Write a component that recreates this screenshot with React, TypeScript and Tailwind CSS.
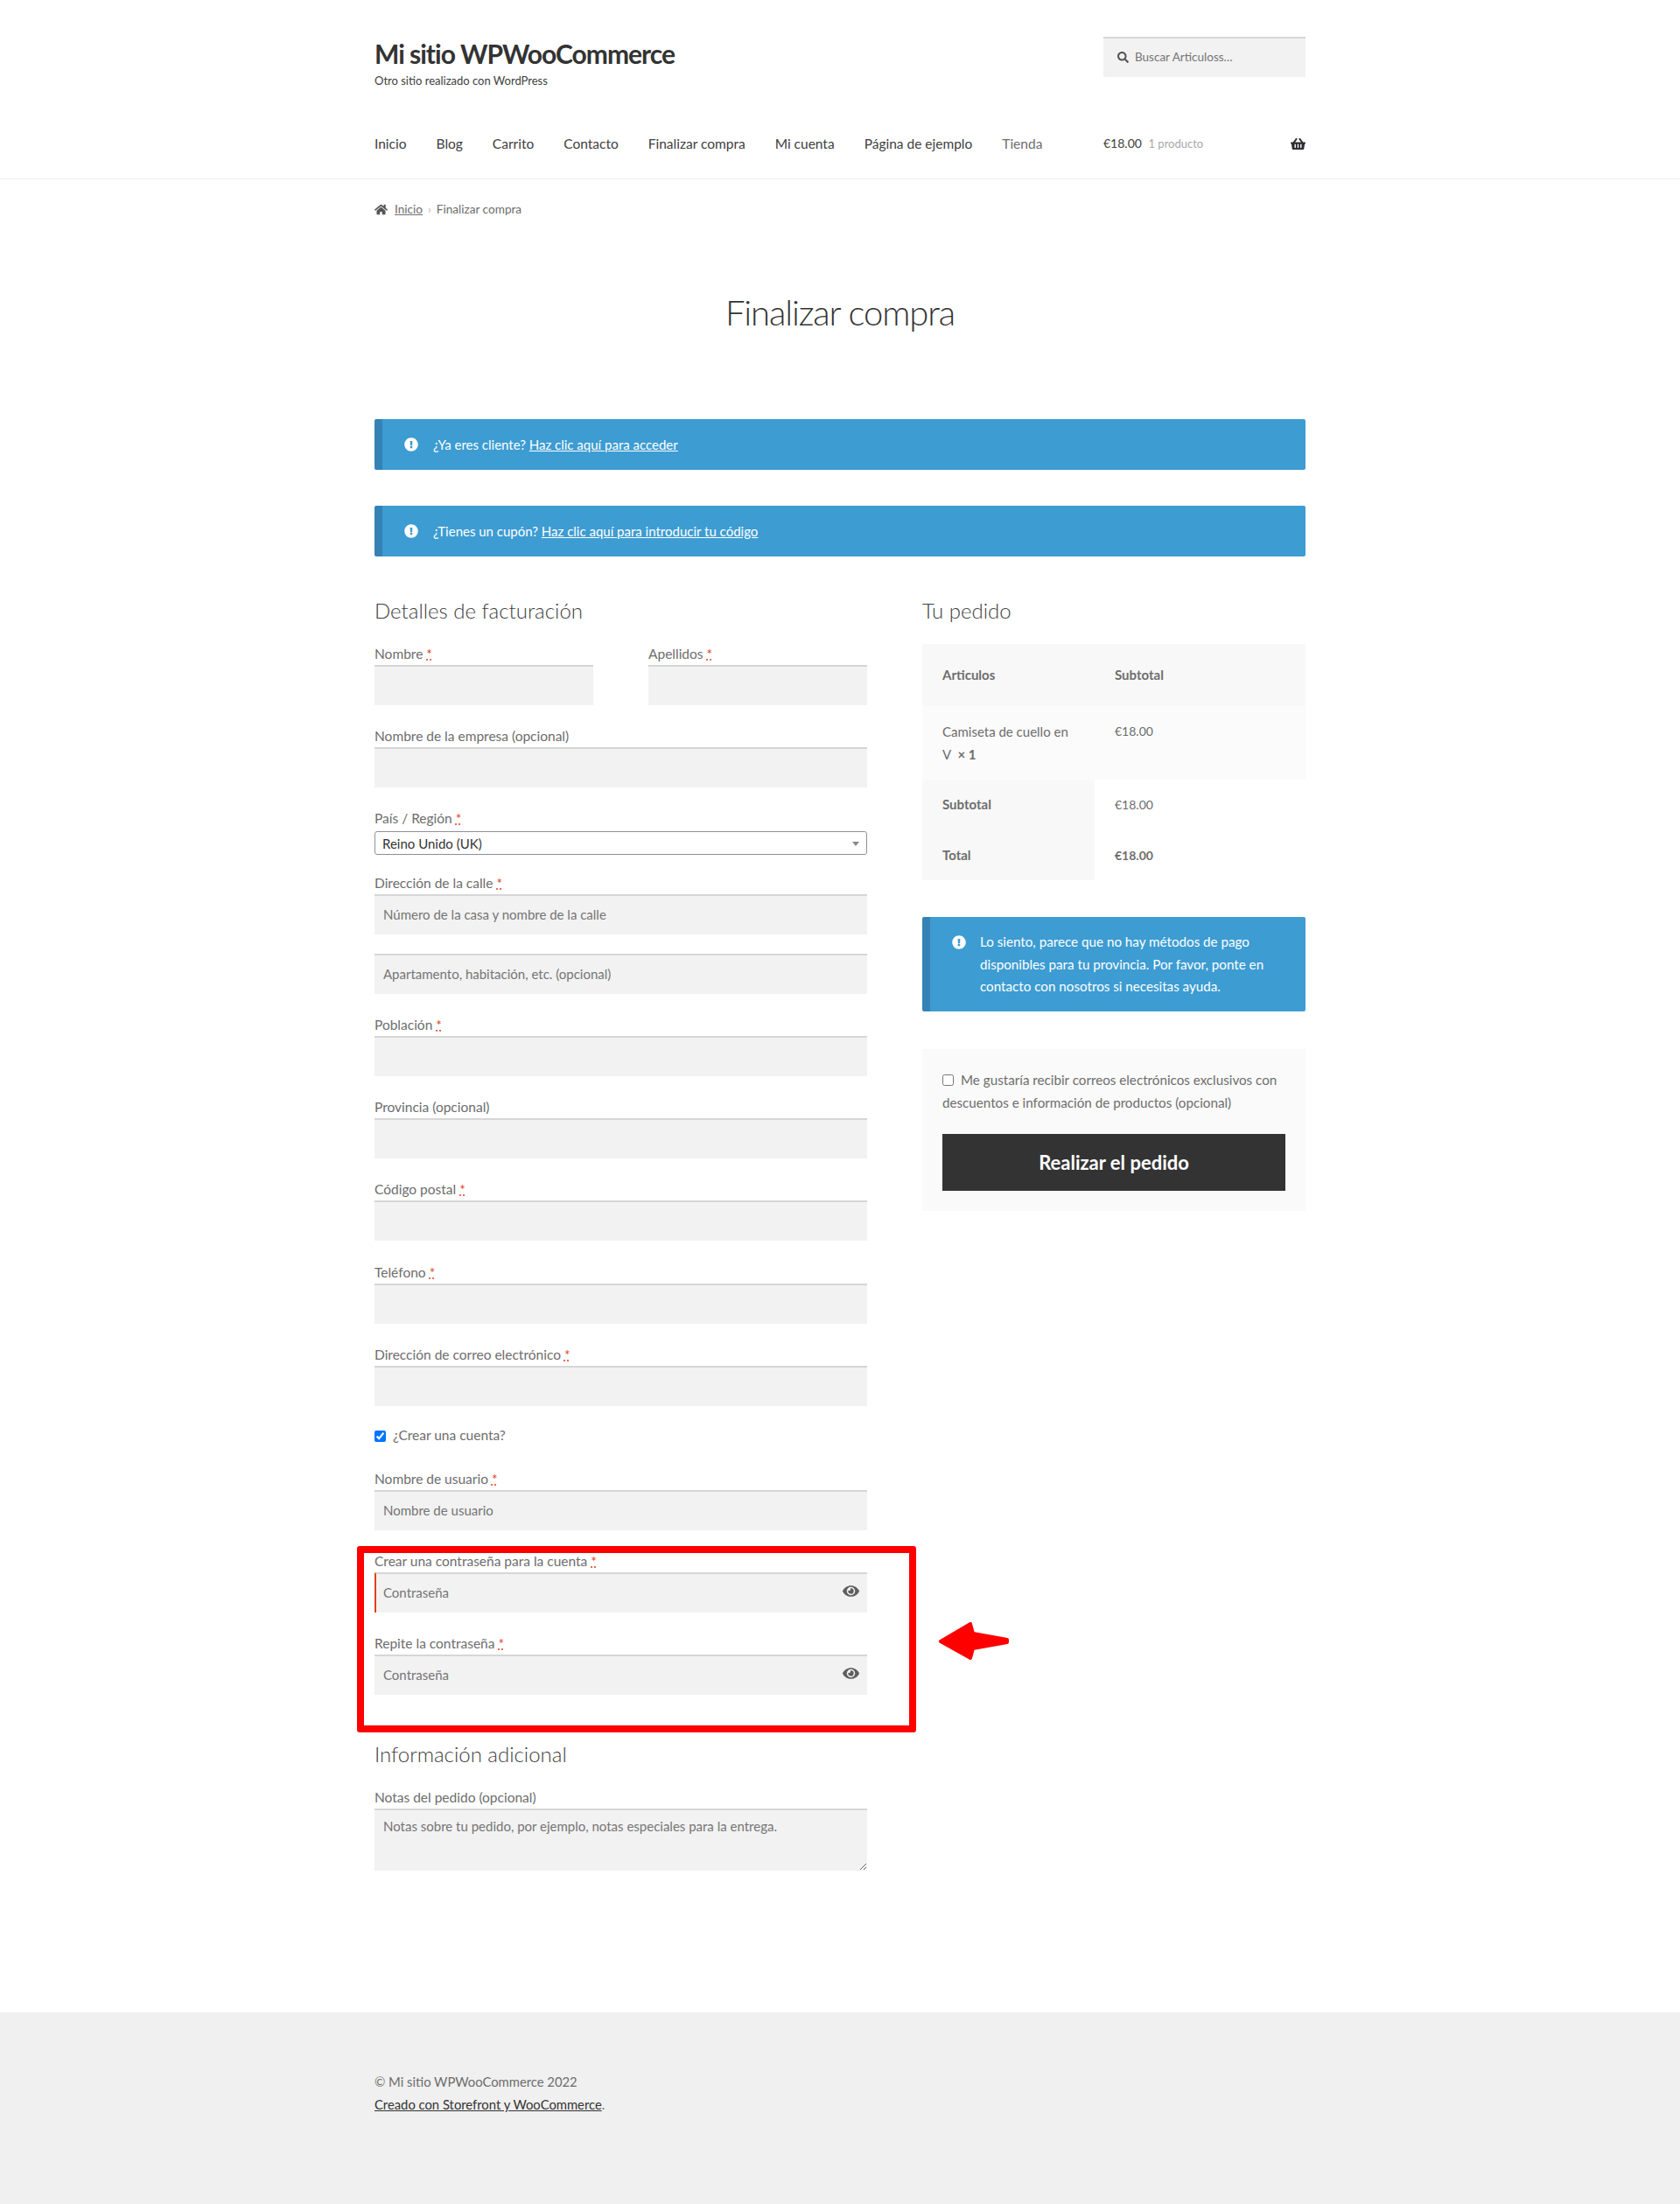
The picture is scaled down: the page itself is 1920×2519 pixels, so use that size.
import { FaExclamationCircle, FaEye, FaHome, FaSearch, FaShoppingBasket } from 'react-icons/fa'

const navItems = ['Inicio', 'Blog', 'Carrito', 'Contacto', 'Finalizar compra', 'Mi cuenta', 'Página de ejemplo']

function Req() {
  return <abbr className="ml-1 text-[#e2401c] underline decoration-dotted">*</abbr>
}

function Field({
  label,
  required,
  placeholder,
  className = '',
  inputClass = '',
  eye,
}: {
  label?: string
  required?: boolean
  placeholder?: string
  className?: string
  inputClass?: string
  eye?: boolean
}) {
  return (
    <div className={className}>
      {label && (
        <label className="block h-[25px] leading-[24px]">
          {label}
          {required && <Req />}
        </label>
      )}
      <div className="relative">
        <input
          placeholder={placeholder}
          className={`block h-[46px] w-full border-t-2 border-[#d6d6d6] bg-[#f2f2f2] px-[10px] pb-[3px] text-[15px] outline-none placeholder:text-[#757575] ${inputClass}`}
        />
        {eye && <FaEye className="absolute right-[9px] top-[12px] text-[19px] text-[#5f5f5f]" />}
      </div>
    </div>
  )
}

function Notice({ children, className = '' }: { children: React.ReactNode; className?: string }) {
  return (
    <div className={`flex rounded-[2px] border-l-[9px] border-[#3582b5] bg-[#3d9cd2] text-white ${className}`}>
      {children}
    </div>
  )
}

export default function App() {
  return (
    <div className="relative flex min-h-[2519px] flex-col bg-white font-['Lato',sans-serif] text-[15.5px] text-[#6d6d6d]">
      <header className="h-[205px] border-b border-[#ececec]">
        <div className="mx-auto w-[1064px] pt-[42px]">
          <div className="flex justify-between">
            <div>
              <h1 className="text-[30px] leading-[38px] font-bold tracking-[-1px] text-[#333333]">Mi sitio WPWooCommerce</h1>
              <p className="mt-[2px] text-[13px] leading-[20px] text-[#404040]">Otro sitio realizado con WordPress</p>
            </div>
            <div className="flex h-[46px] w-[231px] items-center gap-[7px] border-t-2 border-[#d6d6d6] bg-[#f2f2f2] pb-[2px] pl-[16px] text-[13.5px] text-[#757575]">
              <FaSearch className="text-[13px] text-[#555555]" />
              Buscar Articuloss…
            </div>
          </div>
          <div className="mt-[50px] flex items-center justify-between">
            <nav className="flex gap-[34px] text-[15.5px] leading-[24px] text-[#404040]">
              {navItems.map((item) => (
                <span key={item}>{item}</span>
              ))}
              <span className="text-[#6d6d6d]">Tienda</span>
            </nav>
            <div className="flex w-[231px] items-center justify-between">
              <span className="text-[14px] text-[#404040]">
                €18.00 <span className="ml-1 text-[13px] text-[#a8a8a8]">1 producto</span>
              </span>
              <FaShoppingBasket className="text-[17px] text-[#2c2d33]" />
            </div>
          </div>
        </div>
      </header>

      <main className="mx-auto w-[1064px] flex-1">
        <div className="mt-[23px] flex h-[22px] items-center text-[13.6px] text-[#6d6d6d]">
          <FaHome className="mr-[8px] text-[15px] text-[#555555]" />
          <span className="underline">Inicio</span>
          <span className="mx-[6px] text-[#bbbbbb]">›</span>
          Finalizar compra
        </div>

        <h2 className="mt-[75px] text-center text-[40px] leading-[64px] font-light tracking-[-1.1px] text-[#333333]">Finalizar compra</h2>

        <Notice className="mt-[90px] h-[58px] items-center text-[15px]">
          <FaExclamationCircle className="ml-[25px] text-[16px]" />
          <p className="ml-[17px]">
            ¿Ya eres cliente? <span className="underline">Haz clic aquí para acceder</span>
          </p>
        </Notice>
        <Notice className="mt-[41px] h-[58px] items-center text-[15px]">
          <FaExclamationCircle className="ml-[25px] text-[16px]" />
          <p className="ml-[17px]">
            ¿Tienes un cupón? <span className="underline">Haz clic aquí para introducir tu código</span>
          </p>
        </Notice>

        <div className="mt-[44px] flex justify-between">
          <section className="w-[563px]">
            <h3 className="text-[24px] leading-[36px] font-light text-[#404040]">Detalles de facturación</h3>
            <div className="mt-[19px] flex justify-between">
              <Field className="w-[250px]" label="Nombre" required />
              <Field className="w-[250px]" label="Apellidos" required />
            </div>
            <Field className="mt-[23px]" label="Nombre de la empresa (opcional)" />
            <div className="mt-[23px]">
              <label className="block h-[27px] leading-[24px]">
                País / Región
                <Req />
              </label>
              <div className="flex h-[27px] items-center justify-between rounded-[3px] border border-[#8f8f9d] px-[8px] pt-[1px] text-[15px] text-[#333333]">
                Reino Unido (UK)
                <span className="h-0 w-0 border-x-[4px] border-t-[5px] border-x-transparent border-t-[#888888]" />
              </div>
            </div>
            <Field className="mt-[20px]" label="Dirección de la calle" required placeholder="Número de la casa y nombre de la calle" />
            <Field className="mt-[22px]" placeholder="Apartamento, habitación, etc. (opcional)" />
            <Field className="mt-[23px]" label="Población" required />
            <Field className="mt-[23px]" label="Provincia (opcional)" />
            <Field className="mt-[23px]" label="Código postal" required />
            <Field className="mt-[24px]" label="Teléfono" required />
            <Field className="mt-[23px]" label="Dirección de correo electrónico" required />
            <div className="mt-[23px] flex h-[22px] items-center gap-[8px]">
              <input type="checkbox" defaultChecked className="h-[13px] w-[13px] accent-[#0075ff]" />
              ¿Crear una cuenta?
            </div>
            <Field className="mt-[26px]" label="Nombre de usuario" required placeholder="Nombre de usuario" />
            <Field className="mt-[23px]" label="Crear una contraseña para la cuenta" required placeholder="Contraseña" eye inputClass="border-t-0 border-l-2 border-l-[#e2401c] pl-[8px]" />
            <Field className="mt-[23px]" label="Repite la contraseña" required placeholder="Contraseña" eye />
            <h3 className="mt-[50px] text-[24px] leading-[36px] font-light text-[#404040]">Información adicional</h3>
            <div className="mt-[19px]">
              <label className="block h-[25px] leading-[24px]">Notas del pedido (opcional)</label>
              <textarea
                placeholder="Notas sobre tu pedido, por ejemplo, notas especiales para la entrega."
                className="block h-[71px] w-full border-t-2 border-[#d6d6d6] bg-[#f2f2f2] px-[10px] py-[7px] text-[15px] outline-none placeholder:text-[#757575]"
              />
            </div>
          </section>

          <section className="w-[438px]">
            <h3 className="text-[24px] leading-[36px] font-light text-[#404040]">Tu pedido</h3>
            <div className="mt-[20px] grid grid-cols-[197px_1fr] text-[15px]">
              <div className="flex h-[71px] items-center bg-[#f8f8f8] pl-[23px] font-bold">Articulos</div>
              <div className="flex h-[71px] items-center bg-[#f8f8f8] pl-[23px] font-bold">Subtotal</div>
              <div className="h-[84px] bg-[#fbfbfb] pt-[16px] pr-[23px] pl-[23px] leading-[26px]">
                Camiseta de cuello en V <strong className="ml-1">× 1</strong>
              </div>
              <div className="h-[84px] bg-[#fbfbfb] pt-[16px] pl-[23px] text-[14px] leading-[26px]">€18.00</div>
              <div className="flex h-[57px] items-center bg-[#f8f8f8] pl-[23px] font-bold">Subtotal</div>
              <div className="flex h-[57px] items-center pl-[23px] text-[14px]">€18.00</div>
              <div className="flex h-[58px] items-center bg-[#f8f8f8] pl-[23px] font-bold">Total</div>
              <div className="flex h-[58px] items-center pl-[23px] text-[14px] font-bold">€18.00</div>
            </div>
            <Notice className="mt-[42px] h-[108px] pt-[16px] pr-[24px]">
              <FaExclamationCircle className="mt-[5px] ml-[25px] shrink-0 text-[16px]" />
              <p className="ml-[16px] text-[15.2px] leading-[25.5px]">
                Lo siento, parece que no hay métodos de pago disponibles para tu provincia. Por favor, ponte en contacto con nosotros si necesitas ayuda.
              </p>
            </Notice>
            <div className="mt-[43px] h-[185px] bg-[#fafafa] px-[23px] pt-[22px]">
              <p className="text-[15.2px] leading-[26px]">
                <input type="checkbox" className="mr-[8px] h-[13px] w-[13px] align-[-1px]" />
                Me gustaría recibir correos electrónicos exclusivos con descuentos e información de productos (opcional)
              </p>
              <button className="mt-[23px] h-[65px] w-full bg-[#333333] text-[22px] font-bold text-white">Realizar el pedido</button>
            </div>
          </section>
        </div>
      </main>

      <footer className="h-[219px] bg-[#f0f0f0]">
        <div className="mx-auto w-[1064px] pt-[66px] text-[14.8px] leading-[26px]">
          <p>© Mi sitio WPWooCommerce 2022</p>
          <p>
            <span className="text-[#333333] underline">Creado con Storefront y WooCommerce</span>.
          </p>
        </div>
      </footer>

      {/* annotation drawn over the shot */}
      <div className="pointer-events-none absolute top-[1767px] left-[408px] h-[213px] w-[639px] rounded-[3px] border-[8px] border-[#ff0000]" />
      <svg className="absolute top-[1854px] left-[1073px]" width="80" height="43" viewBox="0 0 80 43">
        <path
          d="M2 22 L36 2 L39 13 L78 20 L78 23 L39 30 L36 41 Z"
          fill="#ff0000"
          stroke="#ff0000"
          strokeWidth="4"
          strokeLinejoin="round"
        />
      </svg>
    </div>
  )
}
